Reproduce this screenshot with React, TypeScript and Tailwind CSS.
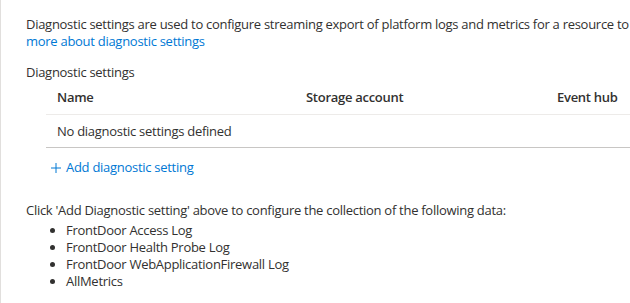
import React from 'react';

const dataTypes = [
  'FrontDoor Access Log',
  'FrontDoor Health Probe Log',
  'FrontDoor WebApplicationFirewall Log',
  'AllMetrics',
];

export default function App() {
  return (
    <div
      className="w-[630px] h-[303px] overflow-hidden bg-white border-l border-[#e1dfdd] pl-[25px] pt-[16px] text-[13px] leading-[17px] tracking-[-0.28px] text-[#323130]"
      style={{ fontFamily: '"Segoe UI", "Open Sans", sans-serif' }}
    >
      {/* Intro */}
      <div className="whitespace-nowrap">
        Diagnostic settings are used to configure streaming export of platform logs and metrics for a resource to
      </div>
      <a href="#" className="block text-[#0078d4] whitespace-nowrap">more about diagnostic settings</a>

      <div className="mt-[14px]">Diagnostic settings</div>

      {/* Table */}
      <div className="ml-[20px]">
        <div className="grid grid-cols-[249px_251px_1fr] h-[34px] items-center border-b border-[#edebe9] font-semibold">
          <div className="pl-[11px]">Name</div>
          <div className="pl-[11px]">Storage account</div>
          <div className="pl-[11px]">Event hub</div>
        </div>
        <div className="flex h-[33px] items-center border-b border-[#c8c6c4] pl-[11px]">
          No diagnostic settings defined
        </div>
        <button className="mt-[11px] ml-[5px] flex items-center gap-[5px] text-[#0078d4]">
          <svg width="10" height="10" viewBox="0 0 10 10" fill="none" stroke="currentColor" strokeWidth="1">
            <path d="M5 0v10M0 5h10" />
          </svg>
          <span>Add diagnostic setting</span>
        </button>
      </div>

      <div className="mt-[26px]">Click 'Add Diagnostic setting' above to configure the collection of the following data:</div>
      <ul className="mt-[3px] list-disc pl-[40px]">
        {dataTypes.map((t) => (
          <li key={t}>{t}</li>
        ))}
      </ul>
    </div>
  );
}
